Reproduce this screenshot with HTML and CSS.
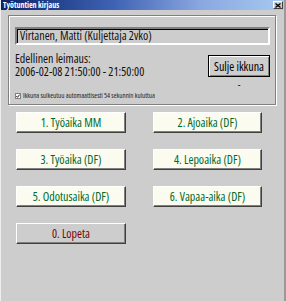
FILE: index.html
```html
<!DOCTYPE html>
<html lang="fi">
<head>
  <meta charset="UTF-8" />
  <title>Työtuntien kirjaus</title>
  <link rel="stylesheet" href="styles.css">
</head>
<body>
  <div class="window">
    <div class="titlebar">
      <span class="title">Työtuntien kirjaus</span>
      <span class="close">
        <svg width="6" height="5" viewBox="0 0 6 5"><path d="M0.5 0.5L5.5 4.5M5.5 0.5L0.5 4.5" stroke="#000" stroke-width="1.3"/></svg>
      </span>
    </div>
    <div class="client">
      <div class="group">
        <div class="field">Virtanen, Matti (Kuljettaja 2vko)</div>
        <div class="info">
          <div class="last">
            <div>Edellinen leimaus:</div>
            <div>2006-02-08 21:50:00 - 21:50:00</div>
          </div>
          <div class="side">
            <button class="close-btn">Sulje ikkuna</button>
            <div class="dash">-</div>
          </div>
        </div>
        <label class="auto">
          <span class="check">
            <svg width="4" height="4" viewBox="0 0 4 4"><path d="M0.3 2L1.5 3.3L3.7 0.6" fill="none" stroke="#000" stroke-width="0.9"/></svg>
          </span>
          Ikkuna sulkeutuu automaattisesti 54 sekunnin kuluttua
        </label>
      </div>
      <div class="keys">
        <button class="key">1. Työaika MM</button>
        <button class="key">2. Ajoaika (DF)</button>
        <button class="key">3. Työaika (DF)</button>
        <button class="key">4. Lepoaika (DF)</button>
        <button class="key">5. Odotusaika (DF)</button>
        <button class="key">6. Vapaa-aika (DF)</button>
        <button class="key quit">0. Lopeta</button>
      </div>
    </div>
  </div>
</body>
</html>
```
FILE: styles.css
```css
:root {
  --face: #cdcdcd;
  --shadow: #808080;
  --dark: #404040;
  --key-bg: #fbfbef;
  --key-text: #006a2c;
}
* { box-sizing: border-box; }
body {
  margin: 0;
  background: var(--face);
  font-family: 'Open Sans', sans-serif;
  font-stretch: condensed;
  font-size: 12px;
  color: #111;
}
.window {
  width: 286px;
  height: 301px;
  background: var(--face);
  border-left: 1px solid #eeeeee;
  border-right: 2px solid #9a9a9a;
}
.titlebar {
  height: 10px;
  display: flex;
  align-items: center;
  justify-content: space-between;
  padding: 0 1px 0 2px;
  background: linear-gradient(to right, #0a246a, #3f63b4 40%, #8aa6e0 70%, #a6caf0);
}
.title {
  color: #fff;
  font-size: 8px;
  font-weight: bold;
  line-height: 10px;
}
.close {
  width: 10px;
  height: 8px;
  display: flex;
  align-items: center;
  justify-content: center;
  background: var(--face);
  border: 1px solid;
  border-color: #fff var(--dark) var(--dark) #fff;
}
.client { padding: 5px 0 0 7px; }
.group {
  width: 268px;
  border: 1px solid var(--shadow);
  box-shadow: inset 1px 1px #fff, 1px 1px #fff;
  padding: 11px 5px 4px 6px;
}
.field {
  height: 18px;
  line-height: 14px;
  padding-left: 3px;
  border: 2px solid;
  border-color: var(--shadow) #fff #fff var(--shadow);
  box-shadow: inset 1px 1px #000;
  white-space: nowrap;
}
.info {
  display: flex;
  justify-content: space-between;
  margin-top: 8px;
}
.last { line-height: 12.5px; }
.side {
  display: flex;
  flex-direction: column;
  align-items: center;
  padding-top: 2px;
}
button {
  font: inherit;
  font-stretch: condensed;
  cursor: pointer;
  padding: 0;
}
.close-btn {
  width: 62px;
  height: 22px;
  color: #000;
  background: var(--face);
  border: 1px solid #000;
  box-shadow: inset 1px 1px #fff, inset -1px -1px var(--shadow);
}
.dash {
  line-height: 10px;
  margin-top: 2px;
  font-size: 10px;
}
.auto {
  display: flex;
  align-items: center;
  gap: 2px;
  margin-top: 2px;
  font-size: 7px;
  line-height: 9px;
  white-space: nowrap;
  color: #222;
}
.check {
  width: 6px;
  height: 6px;
  display: flex;
  align-items: center;
  justify-content: center;
  border: 1px solid var(--shadow);
  background: #fff;
}
.keys {
  display: grid;
  grid-template-columns: 110px 109px;
  grid-auto-rows: 21px;
  column-gap: 27px;
  row-gap: 16px;
  margin: 7px 0 0 8px;
}
.key {
  background: var(--key-bg);
  color: var(--key-text);
  border: 1px solid;
  border-color: #fff var(--dark) var(--dark) #fff;
  box-shadow: inset -1px -1px var(--shadow);
}
.key.quit {
  background: var(--face);
  color: #7a0000;
}
```
